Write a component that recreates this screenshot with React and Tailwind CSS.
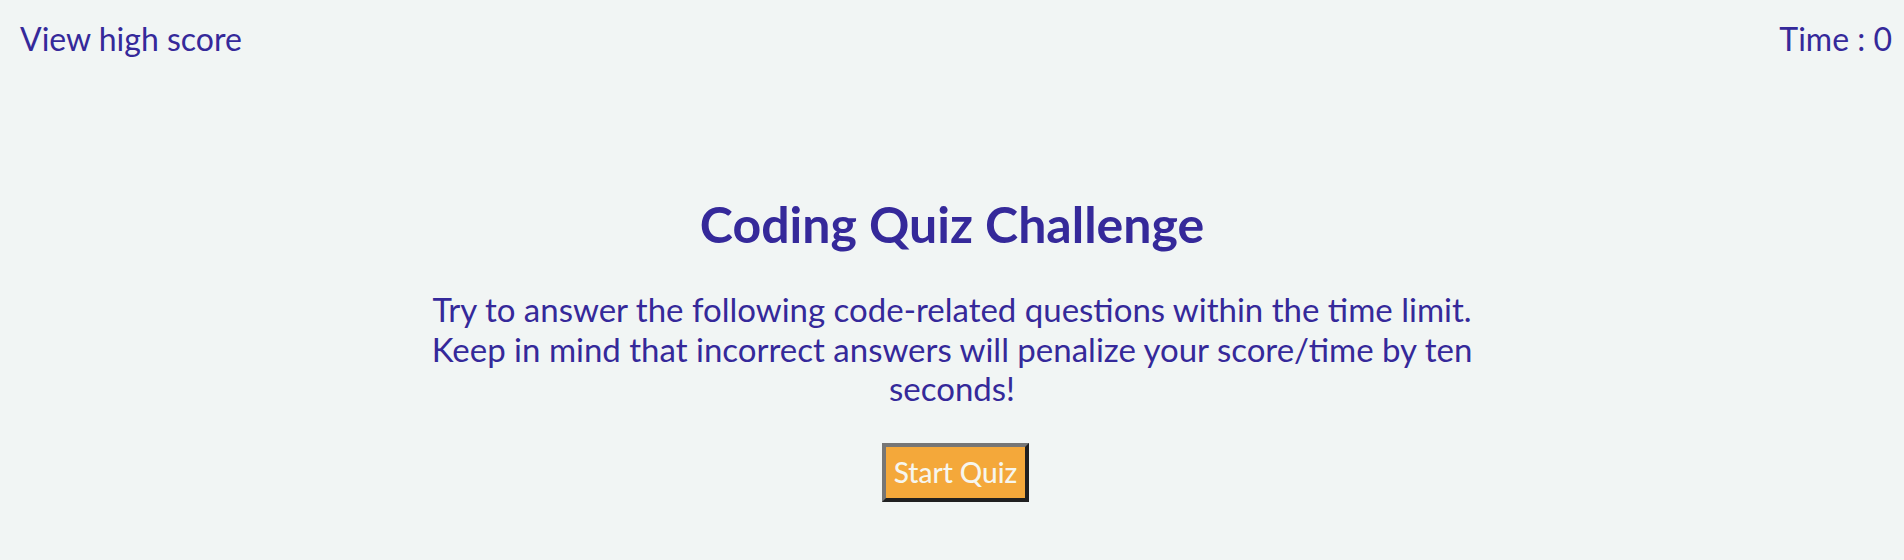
import React from 'react';

const App = () => {
  return (
    <div className="min-h-[560px] bg-[#f1f5f4] text-[#35299a] font-['Lato','Open_Sans',sans-serif]">
      <header className="flex justify-between items-center pl-5 pr-3 pt-[23px] text-[32px] leading-none">
        <a href="#">View high score</a>
        <span>Time : 0</span>
      </header>

      <main className="flex flex-col items-center pt-[144px]">
        <h1 className="text-[50px] font-bold leading-none">Coding Quiz Challenge</h1>
        <p className="mt-[41px] w-[1075px] text-center text-[33px] leading-[39.5px]">
          Try to answer the following code-related questions within the time limit. Keep in mind that incorrect answers will penalize your score/time by ten seconds!
        </p>
        <button className="mt-[34px] ml-[7px] h-[59px] px-[8px] bg-[#f4a83a] text-[#f6f6ee] text-[28px] font-medium border-[4px] border-t-[#767676] border-l-[#767676] border-r-[#202020] border-b-[#202020]">
          Start Quiz
        </button>
      </main>
    </div>
  );
};

export default App;
